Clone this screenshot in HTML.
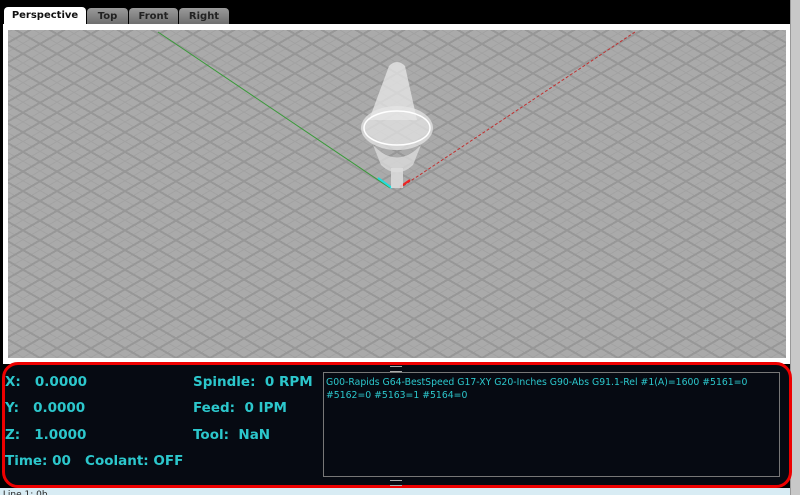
<!DOCTYPE html>
<html><head><style>
body{margin:0;width:800px;height:495px;background:#000;overflow:hidden;position:relative;font-family:"DejaVu Sans","Liberation Sans",sans-serif}
.tab{position:absolute;top:7px;height:17px;font-size:10px;font-weight:bold;text-align:center;line-height:17px;border-radius:4px 4px 0 0}
.in{background:linear-gradient(#9a9a9a,#6e6e6e);color:#222;top:8px;height:16px}
#panel{position:absolute;left:3px;top:24px;width:787px;height:340px;background:#fff}
#vp{position:absolute;left:8px;top:30px;width:778px;height:328px;background:#aaa;
background-image:repeating-linear-gradient(30deg,transparent 0 15px,#979797 15px 17px),repeating-linear-gradient(-30deg,transparent 0 15px,#979797 15px 17px),repeating-linear-gradient(30deg,transparent 0 7.5px,#a2a2a2 7.5px 8.5px),repeating-linear-gradient(-30deg,transparent 0 7.5px,#a2a2a2 7.5px 8.5px);overflow:hidden}
#sb{position:absolute;left:790px;top:0;width:10px;height:495px;background:#c8c8c8;border-left:1px solid #999}
#bot{position:absolute;left:2px;top:362px;width:790px;height:126px;background:#060a12;border:3px solid #e00;border-radius:16px;box-sizing:border-box}
.t{position:absolute;color:#2cc7cc;font-weight:bold;font-size:13.5px;white-space:pre}
#g{position:absolute;left:323px;top:372px;width:457px;height:105px;border:1px solid #777;color:#2cc7cc;font-size:9.3px;line-height:13px;padding:3px 2px;box-sizing:border-box;white-space:nowrap;overflow:hidden}
#st{position:absolute;left:0;top:488px;width:790px;height:7px;background:#d8ecf4;font-size:9px;line-height:14px;color:#222;overflow:hidden}
</style></head><body>
<div id="panel"></div>
<div class="tab" style="left:4px;width:82px;background:#fff;color:#111">Perspective</div>
<div class="tab in" style="left:87px;width:41px">Top</div>
<div class="tab in" style="left:129px;width:49px">Front</div>
<div class="tab in" style="left:179px;width:50px">Right</div>
<div id="vp">
<svg width="778" height="328" style="position:absolute;left:0;top:0">
<line x1="150" y1="2" x2="382" y2="158" stroke="#3a9a3a" stroke-width="1"/>
<line x1="627" y1="2" x2="392" y2="158" stroke="#c03030" stroke-width="1" stroke-dasharray="3,2"/>
<line x1="370" y1="148" x2="384" y2="158" stroke="#2dd" stroke-width="2"/>
<line x1="402" y1="150" x2="392" y2="157" stroke="#e22" stroke-width="2"/>
<path d="M381 36 Q389 28 397 36 L409 90 L361 90 Z" fill="#e8e8e8" opacity=".75"/>
<ellipse cx="389" cy="98" rx="36" ry="22" fill="#e4e4e4" opacity=".75"/>
<ellipse cx="389" cy="98" rx="33" ry="17" fill="none" stroke="#fff" stroke-width="1.5"/>
<path d="M365 115 Q389 140 413 115 L405 135 Q389 150 373 135 Z" fill="#ddd" opacity=".75"/>
<rect x="383" y="138" width="12" height="20" fill="#ddd" opacity=".85"/>
</svg></div>
<div id="sb"></div>
<div id="bot"></div>
<div style="position:absolute;left:390px;top:366px;width:12px;height:4px;border-top:1px solid #aaa;border-bottom:1px solid #aaa"></div>
<div style="position:absolute;left:390px;top:480px;width:12px;height:4px;border-top:1px solid #aaa;border-bottom:1px solid #aaa"></div>
<div class="t" style="left:5px;top:374px">X:   0.0000</div>
<div class="t" style="left:5px;top:400px">Y:   0.0000</div>
<div class="t" style="left:5px;top:427px">Z:   1.0000</div>
<div class="t" style="left:5px;top:453px">Time: 00   Coolant: OFF</div>
<div class="t" style="left:193px;top:374px">Spindle:  0 RPM</div>
<div class="t" style="left:193px;top:400px">Feed:  0 IPM</div>
<div class="t" style="left:193px;top:427px">Tool:  NaN</div>
<div id="g">G00-Rapids G64-BestSpeed G17-XY G20-Inches G90-Abs G91.1-Rel  #1(A)=1600 #5161=0<br>#5162=0 #5163=1 #5164=0</div>
<div id="st">&nbsp;Line 1: 0b</div>
</body></html>
